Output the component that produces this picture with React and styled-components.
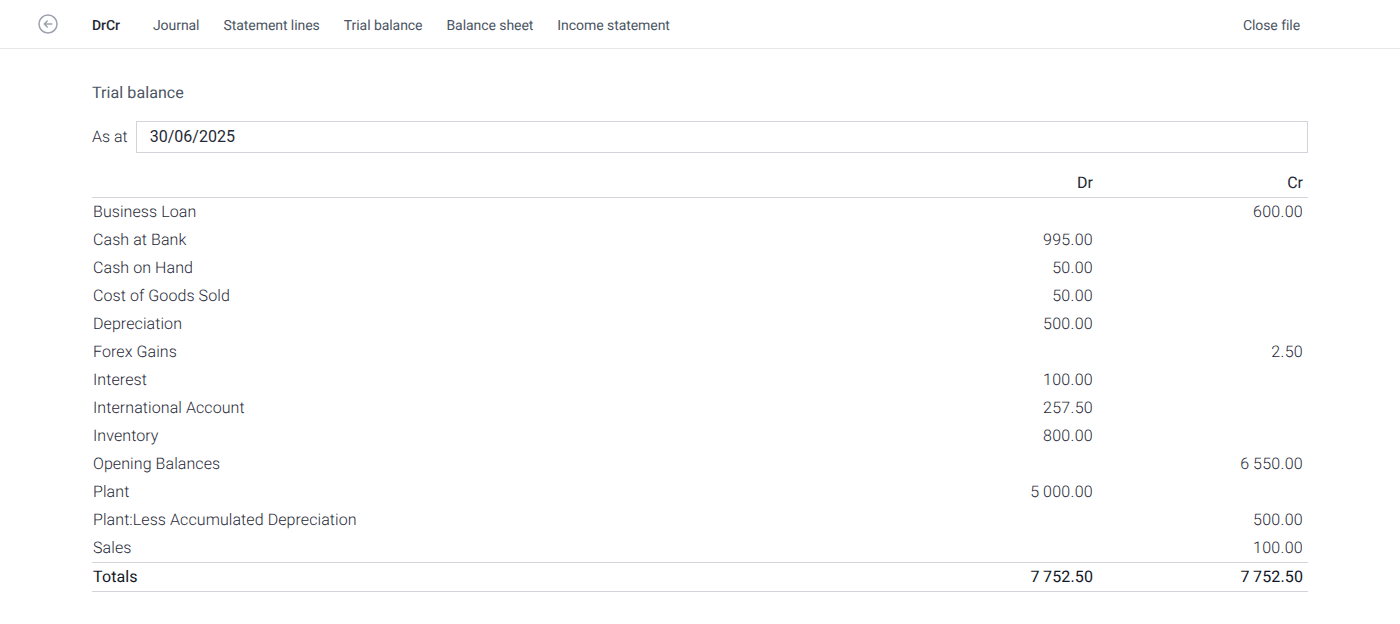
import React from "react"
import styled, { createGlobalStyle } from "styled-components"

const GlobalStyle = createGlobalStyle`
    html, body {
        margin: 0;
        padding: 0;
        background: #fff;
        font-family: Roboto, "Liberation Sans", sans-serif;
        color: #111827;
        text-rendering: geometricPrecision;
    }
`

const navLinks = ["Journal", "Statement lines", "Trial balance", "Balance sheet", "Income statement"]

const rows = [
    ["Business Loan", "", "600.00"],
    ["Cash at Bank", "995.00", ""],
    ["Cash on Hand", "50.00", ""],
    ["Cost of Goods Sold", "50.00", ""],
    ["Depreciation", "500.00", ""],
    ["Forex Gains", "", "2.50"],
    ["Interest", "100.00", ""],
    ["International Account", "257.50", ""],
    ["Inventory", "800.00", ""],
    ["Opening Balances", "", "6\u2009550.00"],
    ["Plant", "5\u2009000.00", ""],
    ["Plant:Less Accumulated Depreciation", "", "500.00"],
    ["Sales", "", "100.00"],
]

export default function App() {
    return (
        <>
            <GlobalStyle />
            <Header>
                <BackButton aria-label="Back">
                    <svg width="24" height="24" viewBox="0 0 24 24" fill="none" stroke="currentColor" strokeWidth="1.5" strokeLinecap="round" strokeLinejoin="round">
                        <path d="M11.25 9l-3 3m0 0l3 3m-3-3h7.5M21 12a9 9 0 11-18 0 9 9 0 0118 0z" />
                    </svg>
                </BackButton>
                <Nav>
                    <Brand>DrCr</Brand>
                    {navLinks.map(link => <NavLink key={link}>{link}</NavLink>)}
                    <CloseLink>Close file</CloseLink>
                </Nav>
            </Header>
            <Main>
                <Title>Trial balance</Title>
                <DateRow>
                    <DateLabel htmlFor="as-at">As at</DateLabel>
                    <DateInput id="as-at" type="text" defaultValue="30/06/2025" />
                </DateRow>
                <Table>
                    <thead>
                        <HeadRow>
                            <HeadCell />
                            <HeadCell $amount>Dr</HeadCell>
                            <HeadCell $amount>Cr</HeadCell>
                        </HeadRow>
                    </thead>
                    <tbody>
                        {rows.map(([name, dr, cr]) => (
                            <BodyRow key={name}>
                                <BodyCell>{name}</BodyCell>
                                <BodyCell $amount>{dr}</BodyCell>
                                <BodyCell $amount>{cr}</BodyCell>
                            </BodyRow>
                        ))}
                        <TotalRow>
                            <TotalCell>Totals</TotalCell>
                            <TotalCell $amount>7{"\u2009"}752.50</TotalCell>
                            <TotalCell $amount>7{"\u2009"}752.50</TotalCell>
                        </TotalRow>
                    </tbody>
                </Table>
            </Main>
        </>
    )
}

const Header = styled.header`
    display: flex;
    align-items: center;
    height: 48px;
    border-bottom: 1px solid #e5e7eb;
`

const BackButton = styled.button`
    display: flex;
    align-items: center;
    justify-content: center;
    width: 24px;
    height: 24px;
    margin-left: 36px;
    padding: 0;
    border: 0;
    background: none;
    color: #9ca3af;
`

const Nav = styled.nav`
    display: flex;
    align-items: center;
    flex: 1;
    margin-left: 32px;
    margin-right: 100px;
    padding-top: 4px;
    font-size: 14px;
    letter-spacing: -0.06px;
`

const Brand = styled.a`
    margin-right: 33px;
    font-weight: 500;
    color: #1f2937;
`

const NavLink = styled.a`
    margin-right: 24px;
    color: #4b5563;
`

const CloseLink = styled(NavLink)`
    margin-left: auto;
    margin-right: 0;
`

const Main = styled.main`
    margin: 0 92px;
    padding-top: 33px;
`

const Title = styled.h1`
    margin: 0;
    font-size: 16px;
    line-height: 22px;
    font-weight: 400;
    letter-spacing: 0.08px;
    color: #4b5563;
`

const DateRow = styled.div`
    display: flex;
    align-items: center;
    margin-top: 17px;
`

const DateLabel = styled.label`
    margin-right: 8px;
    font-size: 16px;
    line-height: 30px;
    font-weight: 300;
    color: #1f2937;
`

const DateInput = styled.input`
    flex: 1;
    box-sizing: border-box;
    height: 32px;
    padding: 0 12px 2px 13px;
    border: 1px solid #d1d5db;
    border-radius: 0;
    outline: none;
    font-family: inherit;
    font-size: 16px;
    color: #1f2937;
`

const Table = styled.table`
    width: 100%;
    margin-top: 15px;
    border-collapse: separate;
    border-spacing: 0;
    font-size: 16px;
`

const HeadRow = styled.tr`
    height: 30px;
`

const HeadCell = styled.th`
    width: ${p => (p.$amount ? "204px" : "auto")};
    padding: 0 ${p => (p.$amount ? "5px" : "1px")} 0 1px;
    border-bottom: 1px solid #d1d5db;
    text-align: right;
    font-weight: 400;
    color: #1f2937;
`

const BodyRow = styled.tr`
    height: 28px;
`

const BodyCell = styled.td`
    padding: 0 ${p => (p.$amount ? "5px" : "1px")} 2px 1px;
    text-align: ${p => (p.$amount ? "right" : "left")};
    font-weight: 300;
    letter-spacing: ${p => (p.$amount ? "0.3px" : "0.08px")};
    color: #1f2937;
`

const TotalRow = styled.tr`
    height: 30px;
`

const TotalCell = styled.td`
    padding: 0 ${p => (p.$amount ? "5px" : "1px")} 2px 1px;
    border-top: 1px solid #d1d5db;
    border-bottom: 1px solid #d1d5db;
    text-align: ${p => (p.$amount ? "right" : "left")};
    font-weight: 400;
    letter-spacing: 0.12px;
    color: #111827;
`
